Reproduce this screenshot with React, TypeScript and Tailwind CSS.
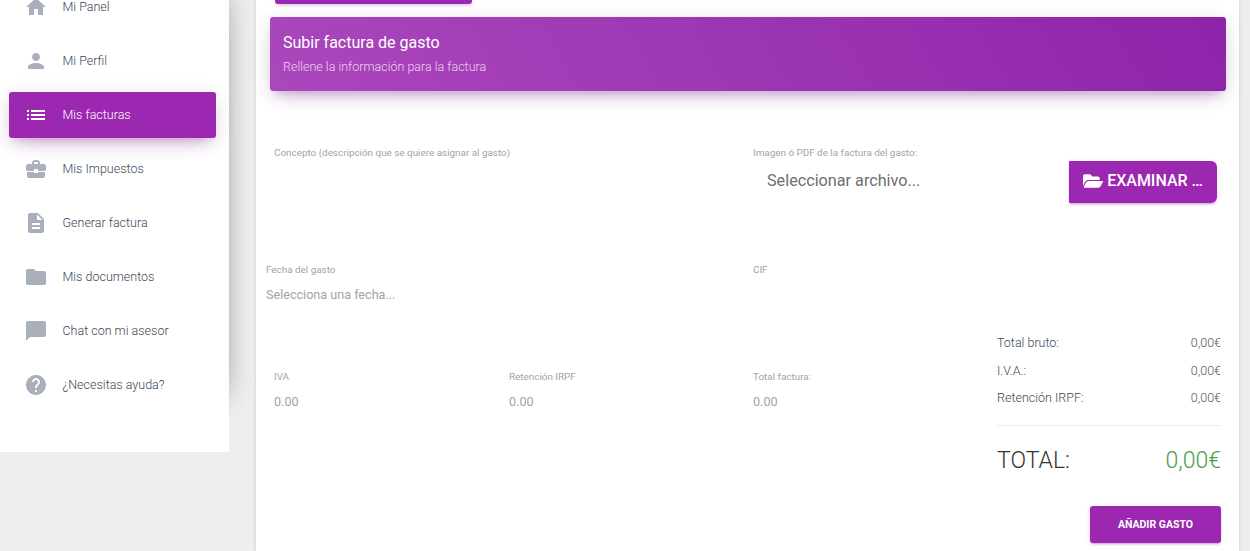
import { FaFolderOpen } from 'react-icons/fa';

const icons = {
  home: 'M10 20v-6h4v6h5v-8h3L12 3 2 12h3v8z',
  person: 'M12 12c2.21 0 4-1.79 4-4s-1.79-4-4-4-4 1.79-4 4 1.79 4 4 4zm0 2c-2.67 0-8 1.34-8 4v2h16v-2c0-2.66-5.33-4-8-4z',
  list: 'M3 13h2v-2H3v2zm0 4h2v-2H3v2zm0-8h2V7H3v2zm4 4h14v-2H7v2zm0 4h14v-2H7v2zM7 7v2h14V7H7z',
  work: 'M10 16v-1H3.01L3 19c0 1.11.89 2 2 2h14c1.11 0 2-.89 2-2v-4h-7v1h-4zm10-9h-4.01V5l-2-2h-4l-2 2v2H4c-1.1 0-2 .9-2 2v3c0 1.11.89 2 2 2h6v-2h4v2h6c1.1 0 2-.9 2-2V9c0-1.1-.9-2-2-2zm-6 0h-4V5h4v2z',
  doc: 'M14 2H6c-1.1 0-1.99.9-1.99 2L4 20c0 1.1.89 2 1.99 2H18c1.1 0 2-.9 2-2V8l-6-6zm2 16H8v-2h8v2zm0-4H8v-2h8v2zm-3-5V3.5L18.5 9H13z',
  folder: 'M10 4H4c-1.1 0-1.99.9-1.99 2L2 18c0 1.1.9 2 2 2h16c1.1 0 2-.9 2-2V8c0-1.1-.9-2-2-2h-8l-2-2z',
  chat: 'M20 2H4c-1.1 0-2 .9-2 2v18l4-4h14c1.1 0 2-.9 2-2V4c0-1.1-.9-2-2-2z',
  help: 'M12 2C6.48 2 2 6.48 2 12s4.48 10 10 10 10-4.48 10-10S17.52 2 12 2zm1 17h-2v-2h2v2zm2.07-7.75l-.9.92C13.45 12.9 13 13.5 13 15h-2v-.5c0-1.1.45-2.1 1.17-2.83l1.24-1.26c.37-.36.59-.86.59-1.41 0-1.1-.9-2-2-2s-2 .9-2 2H8c0-2.21 1.79-4 4-4s4 1.79 4 4c0 .88-.36 1.68-.93 2.25z',
};

const menu = [
  { label: 'Mi Panel', icon: icons.home },
  { label: 'Mi Perfil', icon: icons.person },
  { label: 'Mis facturas', icon: icons.list, active: true },
  { label: 'Mis Impuestos', icon: icons.work },
  { label: 'Generar factura', icon: icons.doc },
  { label: 'Mis documentos', icon: icons.folder },
  { label: 'Chat con mi asesor', icon: icons.chat },
  { label: '¿Necesitas ayuda?', icon: icons.help },
];

function Field({ label, value, className }: { label: string; value?: string; className?: string }) {
  return (
    <div className={className}>
      <div className="text-[9.9px] leading-[12px] text-[#a3a3a3]">{label}</div>
      {value && <div className="mt-[9px] text-[12.6px] leading-[20px] text-[#a3a3a3]">{value}</div>}
    </div>
  );
}

function SummaryRow({ label, value }: { label: string; value: string }) {
  return (
    <div className="flex h-[27.5px] items-center justify-between text-[12.5px] font-light text-[#3c4858]">
      <span>{label}</span>
      <span className="text-[#555555]">{value}</span>
    </div>
  );
}

export default function App() {
  return (
    <div className="flex h-[551px] items-start overflow-hidden bg-[#eeeeee] font-['Roboto',sans-serif]">
      {/* Sidebar */}
      <aside className="-mt-[16px] w-[229px] shrink-0">
        <div className="h-[408px] bg-white shadow-[0_10px_30px_-12px_rgba(0,0,0,0.42),0_4px_25px_0_rgba(0,0,0,0.12)]">
          <nav className="relative z-10 flex flex-col gap-2 pr-[13px] pl-[9px]">
            {menu.map((item) => (
              <div
                key={item.label}
                className={
                  item.active
                    ? 'flex h-[46px] items-center rounded-[3px] bg-[#9c27b0] text-white shadow-[0_12px_20px_-10px_rgba(156,39,176,0.28),0_4px_20px_0_rgba(0,0,0,0.12),0_7px_8px_-5px_rgba(156,39,176,0.2)]'
                    : 'flex h-[46px] items-center text-[#3c4858]'
                }
              >
                <svg viewBox="0 0 24 24" className={`ml-[15px] h-[24px] w-[24px] ${item.active ? 'fill-white' : 'fill-[#a9afbb]'}`}>
                  <path d={item.icon} />
                </svg>
                <span className="ml-[14.5px] text-[12.5px] font-light">{item.label}</span>
              </div>
            ))}
          </nav>
        </div>
        <div className="relative h-[60px] bg-white" />
      </aside>

      {/* Main card */}
      <main className="ml-[27px] h-[551px] w-[983px] shrink-0 bg-white px-[14px] shadow-[0_1px_4px_0_rgba(0,0,0,0.14)]">
        <div className="ml-[5px] h-[4px] w-[197px] rounded-b-[3px] bg-[#9c27b0] shadow-[0_2px_2px_0_rgba(156,39,176,0.14),0_3px_1px_-2px_rgba(156,39,176,0.2),0_1px_5px_0_rgba(156,39,176,0.12)]" />

        <header className="mt-[13px] h-[74px] w-[956px] rounded-[3px] bg-[linear-gradient(60deg,#ab47bc,#8e24aa)] px-[13px] pt-[15px] shadow-[0_12px_20px_-10px_rgba(156,39,176,0.28),0_4px_20px_0_rgba(0,0,0,0.12),0_7px_8px_-5px_rgba(156,39,176,0.2)]">
          <h1 className="text-[16px] leading-[21px] font-normal text-white">Subir factura de gasto</h1>
          <p className="mt-[5px] text-[12.5px] leading-[18px] font-light text-[#ecd3f0]">Rellene la información para la factura</p>
        </header>

        {/* Concepto / archivo */}
        <div className="mt-[56px] flex h-[114px]">
          <Field className="ml-[4px] w-[479px]" label="Concepto (descripción que se quiere asignar al gasto)" />
          <div className="flex-1">
            <Field label="Imagen ó PDF de la factura del gasto:" />
            <div className="-mt-[3px] flex items-start">
              <span className="mt-[14px] ml-[14px] w-[302px] text-[16.2px] leading-[22px] text-[#6e6e6e]">Seleccionar archivo...</span>
              <button className="mt-[5px] flex h-[42px] w-[148px] items-center justify-center gap-[4px] rounded-l-[1px] rounded-r-[6px] bg-[#9c27b0] pb-[2px] text-[16px] font-medium text-white shadow-[0_2px_2px_0_rgba(156,39,176,0.14),0_3px_1px_-2px_rgba(156,39,176,0.2),0_1px_5px_0_rgba(156,39,176,0.12)]">
                <FaFolderOpen className="h-[20px] w-[20px]" />
                EXAMINAR …
              </button>
            </div>
          </div>
        </div>

        {/* Fecha / CIF */}
        <div className="mt-[3px] flex h-[65px]">
          <Field className="ml-[-4px] w-[487px]" label="Fecha del gasto" value="Selecciona una fecha..." />
          <Field label="CIF" />
        </div>

        {/* Importes y resumen */}
        <div className="flex items-start">
          <div className="mt-[42px] flex w-[727px]">
            <Field className="ml-[4px] w-[235px]" label="IVA" value="0.00" />
            <Field className="w-[244px]" label="Retención IRPF" value="0.00" />
            <Field label="Total factura:" value="0.00" />
          </div>
          <div className="w-[224px] pt-[1px]">
            <SummaryRow label="Total bruto:" value="0,00€" />
            <SummaryRow label="I.V.A.:" value="0,00€" />
            <SummaryRow label="Retención IRPF:" value="0,00€" />
            <div className="mt-[12.5px] border-t border-[#eeeeee]" />
            <div className="mt-[15px] flex items-center justify-between text-[23px] leading-[40px] font-light text-[#333333]">
              <span>TOTAL:</span>
              <span className="text-[#43a047]">0,00€</span>
            </div>
            <div className="mt-[25px] flex justify-end">
              <button className="h-[37px] w-[131px] rounded-[3px] bg-[#9c27b0] text-[10.5px] font-bold text-white shadow-[0_2px_2px_0_rgba(156,39,176,0.14),0_3px_1px_-2px_rgba(156,39,176,0.2),0_1px_5px_0_rgba(156,39,176,0.12)]">
                AÑADIR GASTO
              </button>
            </div>
          </div>
        </div>
      </main>
    </div>
  );
}
